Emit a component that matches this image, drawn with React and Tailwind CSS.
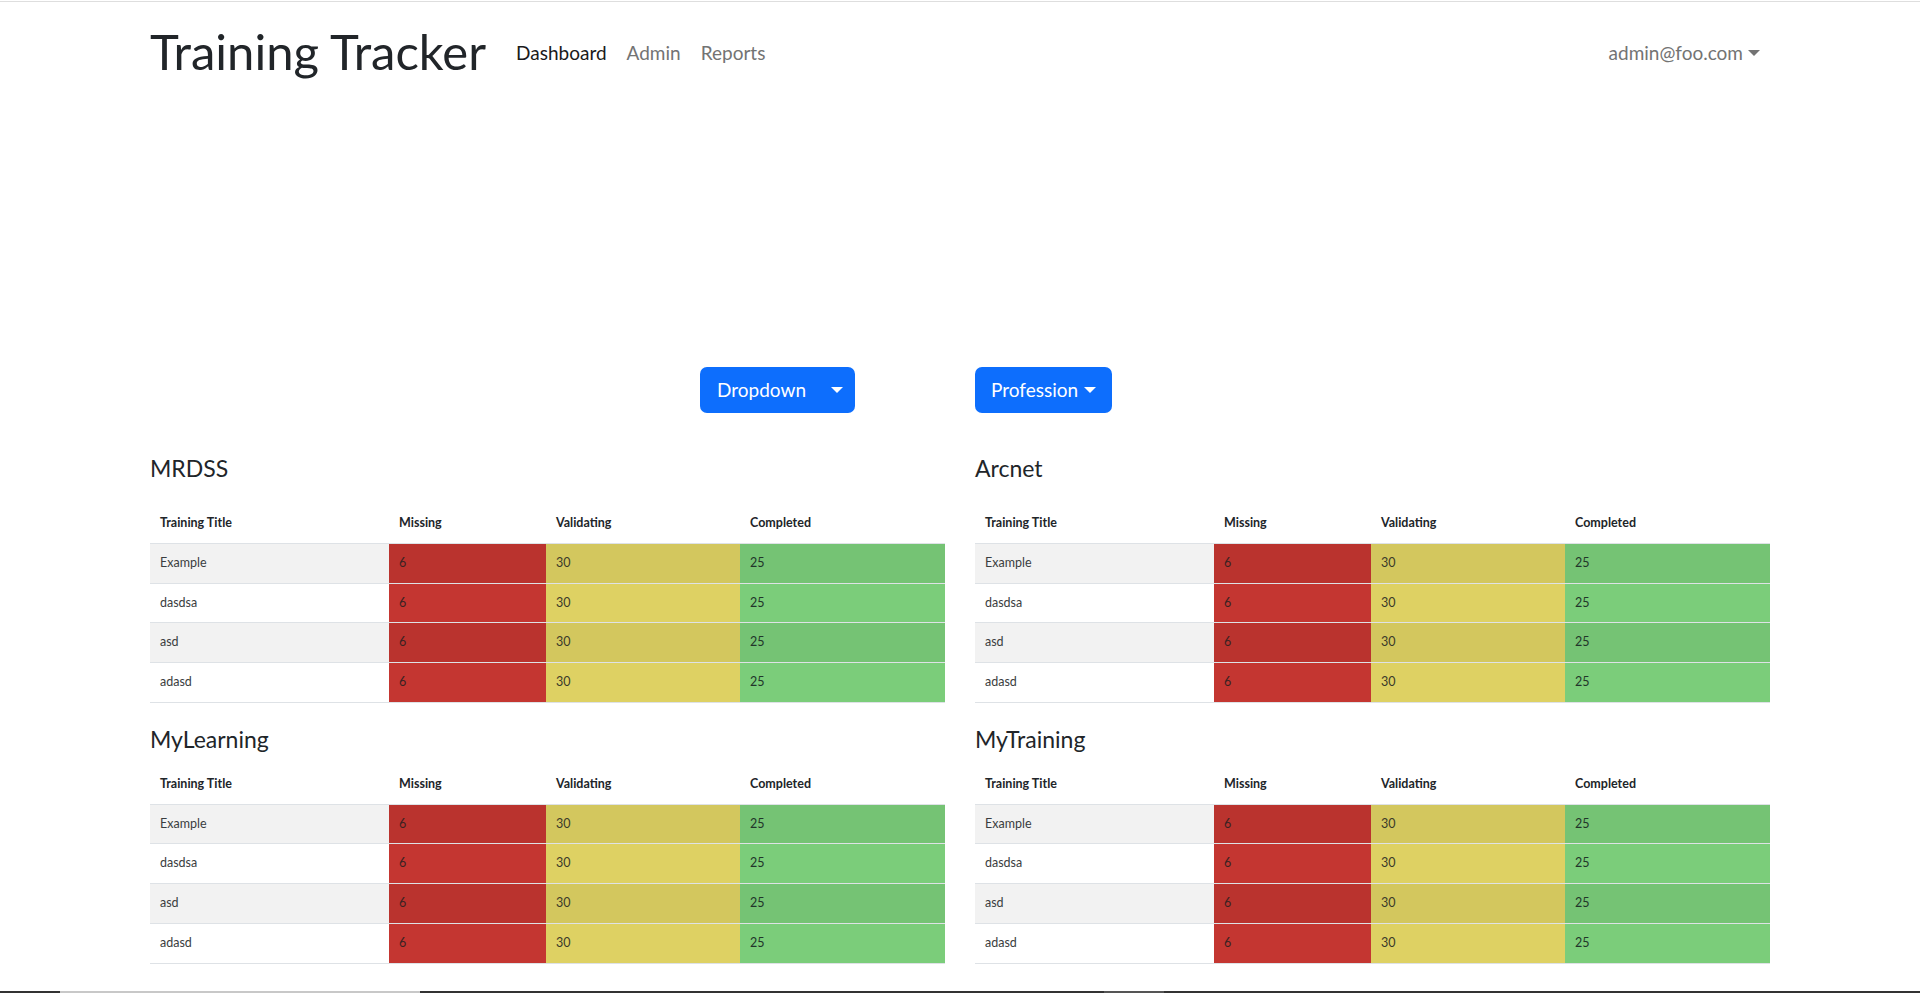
import React from "react";

const rows = ["Example", "dasdsa", "asd", "adasd"];

function Caret({ className = "" }) {
  return (
    <span
      className={
        "inline-block w-0 h-0 border-l-[6px] border-r-[6px] border-t-[6px] border-l-transparent border-r-transparent " +
        className
      }
    />
  );
}

function TrainingTable() {
  return (
    <table className="w-full table-fixed border-collapse text-[12.5px] leading-[18.75px]">
      <colgroup>
        <col className="w-[239px]" />
        <col className="w-[157px]" />
        <col className="w-[194px]" />
        <col className="w-[205px]" />
      </colgroup>
      <thead>
        <tr className="border-b border-[#dee2e6]">
          <th className="text-left font-bold px-[10px] py-[10px]">Training Title</th>
          <th className="text-left font-bold px-[10px] py-[10px]">Missing</th>
          <th className="text-left font-bold px-[10px] py-[10px]">Validating</th>
          <th className="text-left font-bold px-[10px] py-[10px]">Completed</th>
        </tr>
      </thead>
      <tbody>
        {rows.map((r, i) => {
          const odd = i % 2 === 0;
          return (
            <tr key={r} className="border-b border-[#dee2e6]">
              <td className={(odd ? "bg-[#f2f2f2]" : "bg-white") + " px-[10px] py-[10px] text-[#3a3d40]"}>{r}</td>
              <td className={(odd ? "bg-[#ba332e]" : "bg-[#c43631]") + " px-[10px] py-[10px] text-[#3a2222]"}>6</td>
              <td className={(odd ? "bg-[#d3c75e]" : "bg-[#ded163]") + " px-[10px] py-[10px] text-[#3b3a2a]"}>30</td>
              <td className={(odd ? "bg-[#75c374]" : "bg-[#7bcd7a]") + " px-[10px] py-[10px] text-[#22352a]"}>25</td>
            </tr>
          );
        })}
      </tbody>
    </table>
  );
}

function Section({ title, mb }) {
  return (
    <div>
      <h5 className={"text-[23px] leading-[30px] font-normal text-[#212529] " + mb}>{title}</h5>
      <TrainingTable />
    </div>
  );
}

export default function App() {
  return (
    <div className="min-h-[993px] flex flex-col bg-white text-[#212529] font-['Lato',sans-serif]">
      <div className="h-px mt-px bg-[#dedede]" />
      <div className="w-[1620px] mx-auto">
        <nav className="flex items-center pt-[19px]">
          <div className="text-[49px] leading-[60px] font-normal text-[#212529] mr-[20px]">Training Tracker</div>
          <div className="flex items-center pt-[3px] text-[19px] leading-[30px]">
            <a className="px-[10px] text-[#1a1a1a]">Dashboard</a>
            <a className="px-[10px] text-[#737373]">Admin</a>
            <a className="px-[10px] text-[#737373]">Reports</a>
          </div>
          <div className="ml-auto flex items-center pt-[3px] pr-[10px] text-[19px] leading-[30px] text-[#737373]">
            <span>admin@foo.com</span>
            <Caret className="ml-[5px] border-t-[#737373]" />
          </div>
        </nav>

        <div className="grid grid-cols-2 gap-x-[30px] mt-[286px]">
          <div className="pl-[550px]">
            <button className="w-[155px] h-[46px] flex items-center justify-between pl-[17px] pr-[12px] rounded-[7px] bg-[#0d6efd] text-white text-[19px]">
              <span>Dropdown</span>
              <Caret className="border-t-white" />
            </button>
          </div>
          <div>
            <button className="h-[46px] flex items-center px-[16px] rounded-[7px] bg-[#0d6efd] text-white text-[19px]">
              <span>Profession</span>
              <Caret className="ml-[6px] border-t-white" />
            </button>
          </div>
        </div>

        <div className="grid grid-cols-2 gap-x-[30px] gap-y-[21px] mt-[40px]">
          <Section title="MRDSS" mb="mb-[21px]" />
          <Section title="Arcnet" mb="mb-[21px]" />
          <Section title="MyLearning" mb="mb-[11px]" />
          <Section title="MyTraining" mb="mb-[11px]" />
        </div>
      </div>

      <div className="mt-auto h-[2px] flex">
        <div className="w-[60px] bg-[#333333]" />
        <div className="w-[360px] bg-[#c8c8c8]" />
        <div className="w-[684px] bg-[#333333]" />
        <div className="w-[60px] bg-[#555555]" />
        <div className="flex-1 bg-[#333333]" />
      </div>
    </div>
  );
}
